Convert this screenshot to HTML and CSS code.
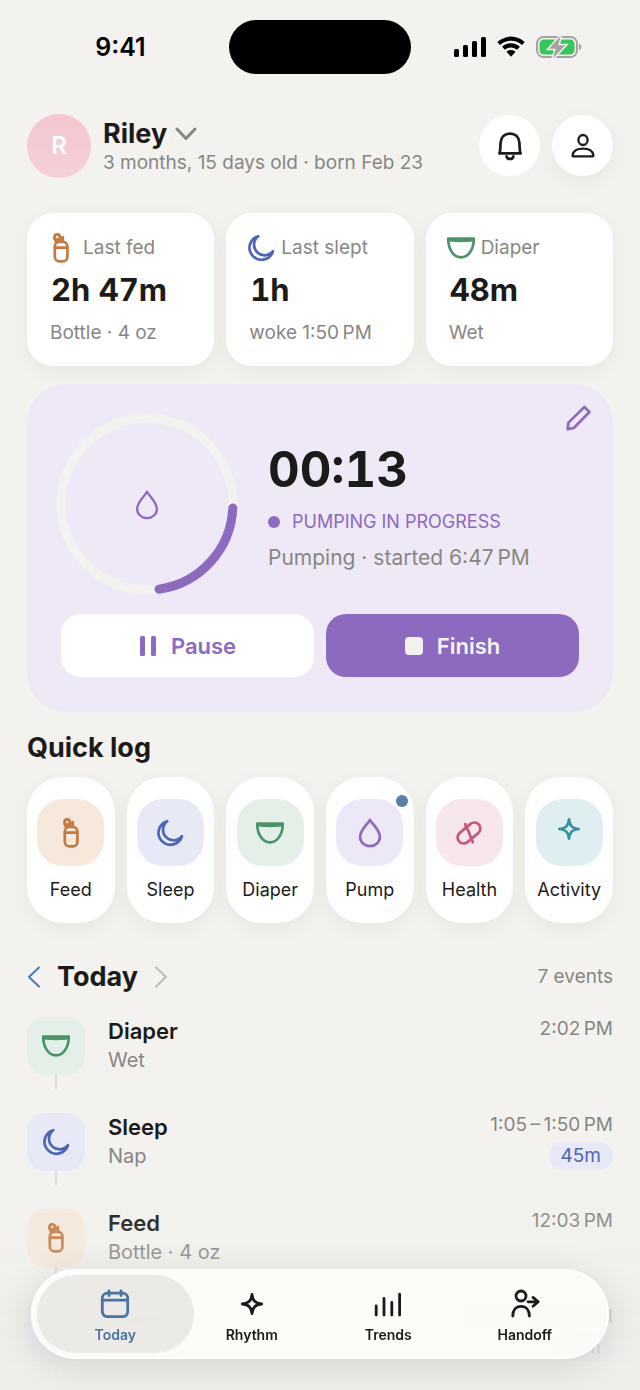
FILE: index.html
```html
<!DOCTYPE html>
<html lang="en">
<head>
<meta charset="utf-8">
<meta name="viewport" content="width=device-width, initial-scale=1">
<title>Riley – Today</title>
<link rel="stylesheet" href="styles.css">
</head>
<body>
<svg class="defs" aria-hidden="true">
  <symbol id="i-feed" viewBox="0 0 30 30"><rect x="8.8" y="8.8" width="12.6" height="19.6" rx="4.6"/><path d="M9 14.6H21.2M10.4 9.6L8.6 5.6M13.8 7.8L14.2 4.6M16.8 8V4.2"/><circle cx="11.2" cy="4" r="2.7"/></symbol>
  <symbol id="i-moon" viewBox="0 0 30 30"><path d="M12.3 3.2A12 12 0 1 0 27 18.2A10.6 10.6 0 1 1 12.3 3.2z"/></symbol>
  <symbol id="i-diaper" viewBox="0 0 30 30"><path d="M2.2 5.5H27.8C27.8 17 22 24.3 15 24.3S2.2 17 2.2 5.5z"/><path class="solid" d="M2.2 5.5H27.8L27 8Q15 9.6 3 8z"/></symbol>
  <symbol id="i-drop" viewBox="0 0 30 30"><path d="M15 1.8C12.5 6.5 5.1 12 5.1 19A9.9 9.2 0 0 0 24.9 19C24.9 12 17.5 6.5 15 1.8z"/></symbol>
  <symbol id="i-pill" viewBox="0 0 30 30"><rect x="2" y="9" width="26" height="12" rx="6" transform="rotate(-40 15 15)"/><path d="M11.2 6C11.6 9 13.4 10 15 14.6S17.4 20.6 18.8 24.2"/></symbol>
  <symbol id="i-spark" viewBox="0 0 30 30"><path d="M15 5.3C15.8 12 18 14.2 24.7 15C18 15.8 15.8 18 15 24.7C14.2 18 12 15.8 5.3 15C12 14.2 14.2 12 15 5.3z"/></symbol>
  <symbol id="i-calendar" viewBox="0 0 30 30"><rect x="2.3" y="4.2" width="25.4" height="23.4" rx="5"/><path d="M2.3 11.2H27.7M9 1.8V6.5M21 1.8V6.5"/></symbol>
  <symbol id="i-bars" viewBox="0 0 30 30"><path d="M3.2 16.8V26M11 9.5V26M18.8 13.5V26M26.6 5.2V26"/></symbol>
  <symbol id="i-handoff" viewBox="0 0 30 30"><circle cx="11" cy="7" r="5"/><path d="M2.8 27C2.8 20.8 6 17.3 11 17.3S19.4 20.8 19.4 27M18 12.8H28M23 8.4L28.2 12.8L23 17.2"/></symbol>
  <symbol id="i-bell" viewBox="0 0 30 30"><path d="M4.4 22.4C5.6 20 5.2 16 5.6 11.6C6 6 9.6 2.6 15 2.6S24 6 24.4 11.6C24.8 16 24.4 20 25.6 22.4zM11.6 25.4C12.2 28.8 17.8 28.8 18.4 25.4"/></symbol>
  <symbol id="i-user" viewBox="0 0 30 30"><ellipse cx="15" cy="9" rx="4.6" ry="5"/><path d="M5.4 25.4C4.6 25.4 4.4 24.8 4.6 24C5.4 20 9.4 17.7 15 17.7S24.6 20 25.4 24C25.6 24.8 25.4 25.4 24.6 25.4z"/></symbol>
  <symbol id="i-pencil" viewBox="0 0 30 30"><path d="M4.6 26.2L5.4 19.6L21.4 4L26.4 9L10.8 25z"/></symbol>
</svg>

<div class="status">
  <time class="clock">9:41</time>
  <span class="island"></span>
  <span class="indicators">
    <svg width="32" height="22" viewBox="0 0 32 22" aria-label="Signal"><rect x="0" y="13" width="5" height="8" rx="1.5"/><rect x="9" y="9" width="5" height="12" rx="1.5"/><rect x="18" y="5" width="5" height="16" rx="1.5"/><rect x="27" y="1" width="5" height="20" rx="1.5"/></svg>
    <svg width="28" height="22" viewBox="0 0 28 22" aria-label="Wi-Fi"><path d="M14 0.6C8.700 .6 3.900 2.700 .3 6.100L3 9C6 6.200 9.800 4.700 14 4.700S22 6.200 25 9L27.700 6.100C24.100 2.700 19.300 .6 14 .6z"/><path d="M14 7.300C10.600 7.300 7.500 8.600 5.100 10.800L7.900 13.800C9.500 12.300 11.600 11.400 14 11.400S18.500 12.300 20.100 13.800L22.900 10.800C20.500 8.600 17.400 7.300 14 7.300z"/><path d="M14 14C12.200 14 10.700 14.700 9.500 15.700L14 20.700L18.500 15.700C17.300 14.700 15.800 14 14 14z"/></svg>
    <svg width="46" height="24" viewBox="0 0 46 24" aria-label="Battery charging"><rect class="bat-case" x="1" y="2" width="40" height="20" rx="6.500"/><path class="bat-tip" d="M43 9C44.600 9.300 45.400 10.500 45.400 12S44.600 14.700 43 15z"/><rect class="bat-fill" x="3.500" y="4.500" width="35" height="15" rx="4.500"/><path class="bat-bolt" d="M25 0.500L13 13.800H19.800L16.800 23.500L29.400 10.200H22.200z"/></svg>
  </span>
</div>

<main class="page">
  <header class="profile">
    <span class="avatar">R</span>
    <div class="who">
      <h1><button class="name" type="button">Riley<svg class="chev" width="22" height="14" viewBox="0 0 22 14" aria-hidden="true"><path d="M2 2L11 11.500L20 2"/></svg></button></h1>
      <p class="muted">3 months, 15 days old · born Feb 23</p>
    </div>
    <button class="round" type="button" aria-label="Notifications"><svg class="icon bell"><use href="#i-bell"/></svg></button>
    <button class="round lifted" type="button" aria-label="Account"><svg class="icon thin"><use href="#i-user"/></svg></button>
  </header>

  <section class="stats">
    <article class="stat"><h2 class="muted"><svg class="icon feed"><use href="#i-feed"/></svg>Last fed</h2><strong>2h 47m</strong><p class="muted">Bottle · 4 oz</p></article>
    <article class="stat"><h2 class="muted"><svg class="icon sleep"><use href="#i-moon"/></svg>Last slept</h2><strong>1h</strong><p class="muted">woke 1:50&#8239;PM</p></article>
    <article class="stat"><h2 class="muted"><svg class="icon diaper"><use href="#i-diaper"/></svg>Diaper</h2><strong>48m</strong><p class="muted">Wet</p></article>
  </section>

  <section class="timer">
    <button class="edit" type="button" aria-label="Edit"><svg class="icon"><use href="#i-pencil"/></svg></button>
    <div class="session">
      <div class="ring">
        <svg class="dial" viewBox="0 0 180 180" aria-hidden="true"><circle class="track" cx="90" cy="90" r="86"/><path class="arc" d="M175.800 94A86 86 0 0 1 102 175.200"/></svg>
        <svg class="icon thin"><use href="#i-drop"/></svg>
      </div>
      <div class="reading">
        <time class="elapsed">00:13</time>
        <p class="live">PUMPING IN PROGRESS</p>
        <p class="muted started">Pumping · started 6:47&#8239;PM</p>
      </div>
    </div>
    <div class="actions">
      <button class="action pause" type="button"><svg width="18" height="22" viewBox="0 0 18 22" aria-hidden="true"><rect x="1" y="1" width="5" height="20" rx="1.500"/><rect x="12" y="1" width="5" height="20" rx="1.500"/></svg>Pause</button>
      <button class="action finish" type="button"><svg width="18" height="18" viewBox="0 0 18 18" aria-hidden="true"><rect width="18" height="18" rx="4"/></svg>Finish</button>
    </div>
  </section>

  <h2 class="title quick-title">Quick log</h2>
  <section class="quick">
    <button class="tile" type="button"><span class="swatch feed"><svg class="icon"><use href="#i-feed"/></svg></span>Feed</button>
    <button class="tile" type="button"><span class="swatch sleep"><svg class="icon"><use href="#i-moon"/></svg></span>Sleep</button>
    <button class="tile" type="button"><span class="swatch diaper"><svg class="icon"><use href="#i-diaper"/></svg></span>Diaper</button>
    <button class="tile" type="button"><span class="swatch pump"><svg class="icon"><use href="#i-drop"/></svg></span>Pump<span class="dot"></span></button>
    <button class="tile" type="button"><span class="swatch health"><svg class="icon"><use href="#i-pill"/></svg></span>Health</button>
    <button class="tile" type="button"><span class="swatch activity"><svg class="icon"><use href="#i-spark"/></svg></span>Activity</button>
  </section>

  <div class="day">
    <button class="step prev" type="button" aria-label="Previous day"><svg width="14" height="24" viewBox="0 0 14 24"><path d="M12 2.500L2 12L12 21.500"/></svg></button>
    <h2 class="title">Today</h2>
    <button class="step next" type="button" aria-label="Next day"><svg width="14" height="24" viewBox="0 0 14 24"><path d="M2 2.500L12 12L2 21.500"/></svg></button>
    <span class="muted count">7 events</span>
  </div>

  <ol class="log">
    <li class="entry"><span class="badge diaper"><svg class="icon"><use href="#i-diaper"/></svg></span><div class="what"><h3>Diaper</h3><p class="muted">Wet</p></div><div class="when muted"><time>2:02&#8239;PM</time></div></li>
    <li class="entry"><span class="badge sleep"><svg class="icon"><use href="#i-moon"/></svg></span><div class="what"><h3>Sleep</h3><p class="muted">Nap</p></div><div class="when muted"><time>1:05&#8239;–&#8239;1:50&#8239;PM</time><span class="length sleep">45m</span></div></li>
    <li class="entry"><span class="badge feed"><svg class="icon"><use href="#i-feed"/></svg></span><div class="what"><h3>Feed</h3><p class="muted">Bottle · 4 oz</p></div><div class="when muted"><time>12:03&#8239;PM</time></div></li>
    <li class="entry"><span class="badge pump"><svg class="icon"><use href="#i-drop"/></svg></span><div class="what"><h3>Pump</h3><p class="muted">Breasts</p></div><div class="when muted"><time>10:20&#8239;–&#8239;10:38&#8239;AM</time><span class="length pump">18m</span></div></li>
  </ol>
</main>

<div class="dock">
  <nav class="tabs">
    <a class="tab current" href="#today" aria-current="page"><svg class="icon"><use href="#i-calendar"/></svg>Today</a>
    <a class="tab" href="#rhythm"><svg class="icon"><use href="#i-spark"/></svg>Rhythm</a>
    <a class="tab" href="#trends"><svg class="icon"><use href="#i-bars"/></svg>Trends</a>
    <a class="tab" href="#handoff"><svg class="icon"><use href="#i-handoff"/></svg>Handoff</a>
  </nav>
</div>
</body>
</html>
```
FILE: styles.css
```css
:root {
  --bg: #f3f2ee;
  --ink: #1c1b19;
  --muted: #888682;
  --purple: #8b6abf;
  --lift: 0 6px 20px rgba(60, 55, 40, .06);
}

* { box-sizing: border-box; margin: 0; padding: 0; }

html, body { height: 100%; }

body {
  background: var(--bg);
  color: var(--ink);
  font: 400 19px/24px Inter, "Liberation Sans", sans-serif;
  overflow: hidden;
}

button { font: inherit; color: inherit; background: none; border: 0; }
a { color: inherit; text-decoration: none; }
ol { list-style: none; }
svg { display: block; flex: none; }
.defs { position: absolute; width: 0; height: 0; }
.muted { color: var(--muted); font-weight: 400; }

.icon {
  width: 30px;
  height: 30px;
  fill: none;
  stroke: currentColor;
  stroke-width: 2.7;
  stroke-linecap: round;
  stroke-linejoin: round;
}
.icon.thin { stroke-width: 2.3; }
.solid { fill: currentColor; stroke-width: 1; }

.feed { color: #c47a40; }
.sleep { color: #5064b4; }
.diaper { color: #4a9468; }
.pump { color: var(--purple); }
.health { color: #c4587a; }
.activity { color: #38909c; }

/* Status bar */
.status {
  display: grid;
  grid-template-columns: 1fr 182px 1fr;
  align-items: center;
  height: 94px;
}
.clock { color: #000; font-size: 25px; font-weight: 600; padding-left: 12px; justify-self: center; }
.island { height: 54px; border-radius: 27px; background: #000; }
.indicators { display: flex; align-items: center; gap: 11px; padding-left: 43px; }
.bat-case { fill: none; stroke: #a5a3a1; stroke-width: 2; }
.bat-tip { fill: #a5a3a1; }
.bat-fill { fill: #34c759; }
.bat-bolt { fill: #a5a3a1; stroke: var(--bg); stroke-width: 3; paint-order: stroke; }

.page { padding: 19px 27px 0; }

/* Child profile */
.profile { display: flex; align-items: center; gap: 12px; height: 65px; }
.avatar {
  display: grid;
  place-items: center;
  width: 64px;
  height: 64px;
  border-radius: 50%;
  background: linear-gradient(#f4c6ce, #f5d0d7);
  color: #fff;
  font-size: 24px;
  font-weight: 600;
}
.who { flex: 1; padding-top: 1px; }
.name { display: flex; align-items: center; gap: 8px; font-size: 27px; line-height: 34px; font-weight: 700; }
.chev { fill: none; stroke: #888682; stroke-width: 3; stroke-linecap: round; stroke-linejoin: round; }
.round { display: grid; place-items: center; width: 61px; height: 61px; border-radius: 50%; background: #fff; }
.lifted { box-shadow: var(--lift); }

/* Summary cards */
.stats { display: grid; grid-template-columns: repeat(3, 1fr); gap: 12px; margin-top: 35px; }
.stat {
  display: flex;
  flex-direction: column;
  height: 153px;
  padding: 20px 22px;
  border-radius: 26px;
  background: #fff;
  box-shadow: var(--lift);
}
.stat h2 { display: flex; align-items: center; gap: 5px; height: 30px; font-size: 19px; white-space: nowrap; }
.stat h2 .icon { margin-left: -2px; }
.stat h2 .feed { margin: 0 2px 0 -3px; }
.stat strong { margin: 7px 0 11px 2px; font-size: 31px; line-height: 40px; font-weight: 700; font-variant-numeric: tabular-nums; }
.stat p { padding-left: 1px; }

/* Running session */
.timer { position: relative; margin-top: 18px; padding: 30px 34px 35px; border-radius: 38px; background: #efe9f7; color: var(--purple); }
.edit { position: absolute; top: 19px; right: 20px; }
.session { display: flex; align-items: center; gap: 31px; }
.ring { display: grid; place-items: center; margin-left: -4px; }
.ring > svg { grid-area: 1 / 1; }
.ring .icon { margin-top: 2px; }
.dial { width: 180px; height: 180px; fill: none; stroke-width: 9; stroke-linecap: round; overflow: visible; }
.track { stroke: var(--bg); }
.arc { stroke: var(--purple); }
.reading { padding-top: 4px; }
.elapsed { display: block; color: var(--ink); font-size: 49px; line-height: 60px; font-weight: 700; font-variant-numeric: tabular-nums; }
.live { display: flex; align-items: center; gap: 12px; margin-top: 8px; font-size: 18px; line-height: 28px; }
.live::before { content: ""; width: 12px; height: 12px; border-radius: 50%; background: currentColor; }
.started { margin-top: 8px; font-size: 21px; line-height: 28px; }
.actions { display: grid; grid-template-columns: 1fr 1fr; gap: 12px; margin-top: 20px; }
.action {
  display: flex;
  align-items: center;
  justify-content: center;
  gap: 14px;
  height: 63px;
  border-radius: 20px;
  font-size: 22px;
  font-weight: 600;
}
.action svg { fill: currentColor; }
.pause { background: #fff; }
.finish { background: var(--purple); color: var(--bg); }

/* Quick log */
.title { font-size: 27px; line-height: 36px; font-weight: 700; }
.quick-title { margin-top: 18px; }
.quick { display: grid; grid-template-columns: repeat(6, 1fr); gap: 12px; margin-top: 11px; }
.tile {
  position: relative;
  display: flex;
  flex-direction: column;
  align-items: center;
  gap: 12px;
  height: 146px;
  padding-top: 22px;
  border-radius: 36px;
  background: #fff;
  box-shadow: var(--lift);
  font-size: 18px;
}
.dot { position: absolute; top: 18px; right: 6px; width: 12px; height: 12px; border-radius: 50%; background: #5b7fa8; }
.swatch, .badge { display: grid; place-items: center; }
.swatch { width: 67px; height: 67px; border-radius: 26px; }
.swatch.activity { padding-bottom: 8px; }
.swatch.feed, .badge.feed { background: #f6e9dc; }
.swatch.sleep, .badge.sleep, .length.sleep { background: #e7e9f7; }
.swatch.diaper, .badge.diaper { background: #e4f0e7; }
.swatch.pump, .badge.pump, .length.pump { background: #ede8f7; }
.swatch.health { background: #f7e6eb; }
.swatch.activity { background: #dfeff1; }

/* Day log */
.day { display: flex; align-items: center; margin-top: 36px; }
.step svg { fill: none; stroke: currentColor; stroke-width: 2; stroke-linecap: round; stroke-linejoin: round; }
.prev { margin-right: 16px; color: #4a7cb4; }
.next { margin-left: 16px; color: #bdbbb8; }
.count { margin-left: auto; }
.log { margin-top: 22px; }
.entry { display: grid; grid-template-columns: 58px 1fr auto; column-gap: 23px; height: 96px; align-items: start; }
.badge { position: relative; height: 58px; border-radius: 18px; }
.badge::after { content: ""; position: absolute; top: 100%; left: 28px; width: 2px; height: 14px; background: #dddbd8; }
.entry h3 { font-size: 22px; line-height: 28px; font-weight: 600; }
.entry .what p { font-size: 20px; line-height: 30px; }
.when { display: flex; flex-direction: column; align-items: flex-end; gap: 5px; }
.length { padding: 2px 12px; border-radius: 14px; }

/* Floating tab bar */
.dock {
  position: fixed;
  inset: auto 0 0 0;
  padding: 79px 31px 31px;
  background: linear-gradient(rgba(240, 239, 235, 0), rgba(238, 237, 233, .25) 40%, rgba(236, 235, 231, .7) 60%, rgba(238, 237, 233, .95));
}
.tabs {
  display: grid;
  grid-template-columns: repeat(4, 1fr);
  height: 90px;
  padding: 6px 16px;
  border-radius: 45px;
  background: rgba(253, 252, 248, .9);
  box-shadow: inset 0 0 0 2px rgba(255, 255, 255, .8), 0 6px 34px rgba(40, 38, 30, .13);
  backdrop-filter: blur(3px);
}
.tab {
  display: flex;
  flex-direction: column;
  align-items: center;
  gap: 6px;
  padding-top: 14px;
  font-size: 14px;
  line-height: 20px;
  font-weight: 600;
}
.tab .icon { stroke-width: 2.8; }
.current { margin: 0 -10px; border-radius: 39px; background: rgba(230, 229, 225, .8); color: #4a74a4; }
```
